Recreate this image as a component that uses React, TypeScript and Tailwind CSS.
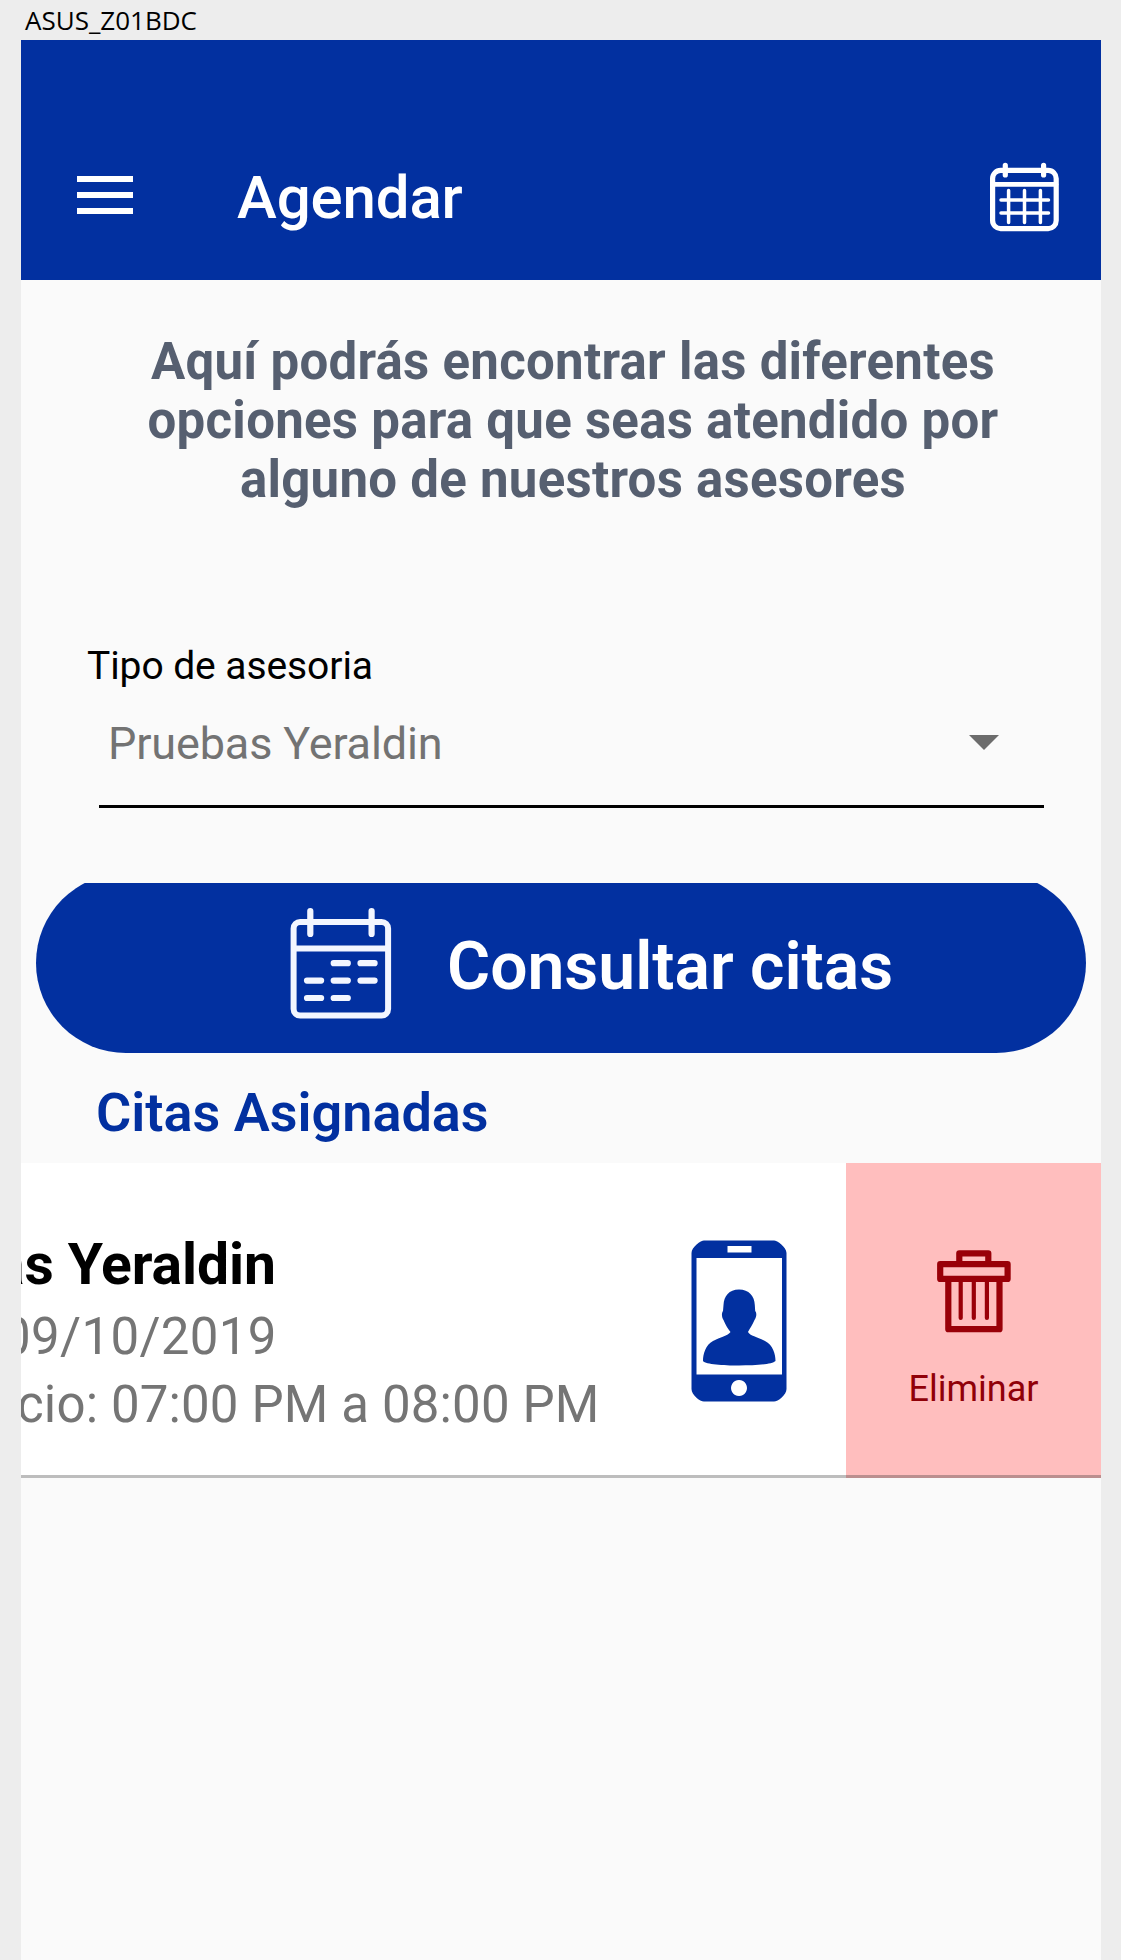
import React from "react";

function MenuIcon() {
  return (
    <div className="flex w-14 flex-col gap-2.5">
      <span className="h-1.5 bg-white" />
      <span className="h-1.5 bg-white" />
      <span className="h-1.5 bg-white" />
    </div>
  );
}

function CalendarGridIcon() {
  return (
    <svg width="70" height="70" viewBox="0 0 70 70" fill="none" stroke="#fff" strokeLinecap="round">
      <rect x="2.6" y="8.4" width="63.6" height="58.2" rx="8" strokeWidth="5.2" />
      <path d="M3 22.400H66" strokeWidth="4.8" />
      <path d="M15.3 3.400V13M53.6 3.400V13" strokeWidth="5.2" />
      <path d="M18.6 28.5V60.5M34.5 28.5V60.5M50.4 28.5V60.5M11 38H58.5M11 51H58.5" strokeWidth="3.5" />
    </svg>
  );
}

function CalendarListIcon() {
  return (
    <svg width="102" height="114" viewBox="0 0 102 114" fill="none" stroke="#f3f6ff" strokeLinecap="round">
      <rect x="3.600" y="16" width="94.5" height="93.600" rx="6.5" strokeWidth="6" />
      <path d="M4 42.5H98" strokeWidth="6" strokeLinecap="butt" />
      <path d="M20.3 5V28M81.600 5V28" strokeWidth="6.200" />
      <path
        d="M43.700 57.2H57.800M70.500 57.2H84.600M17 74.6H31.100M43.700 74.6H57.800M70.500 74.6H84.600M17 92H31.100M43.700 92H57.800"
        strokeWidth="6.200"
      />
    </svg>
  );
}

function PhoneContactIcon() {
  return (
    <svg width="96" height="162" viewBox="0 0 96 162">
      <path
        fillRule="evenodd"
        fill="#0230a0"
        d="M13 .5H83C86 .5 95.500 7 95.500 13V149C95.500 155 87 161.500 83 161.500H13C9 161.500 .5 155 .5 149V13C.5 7 10 .5 13 .5ZM5.500 18V134.500H91V18ZM36.500 6V12.500H60.500V6ZM48 140a8 8 0 1 0 .01 0Z"
      />
      <path
        fill="#0230a0"
        d="M48 49.500C58 49.500 63.500 56 63.800 65L64.200 71C66 73 65.500 77 63.500 80C61.500 85 58.500 89 57 92C59 96 67 97 74 101C82 105 84.500 114 84.500 121C81 124.500 64 125.500 48 125.500C32 125.500 15 124.500 12 121C12 114 14.500 105 22 101C29 97 37 96 39.500 92C37 89 34.500 85 32.500 80C30.500 77 30.500 73 32 71L32.500 65C33 56 38 49.500 48 49.500Z"
      />
    </svg>
  );
}

function TrashIcon() {
  return (
    <svg width="74" height="83" viewBox="0 0 74 83" fill="none" stroke="#990008" strokeLinejoin="round">
      <rect x="3.2" y="14.200" width="67.400" height="14.700" strokeWidth="6.200" />
      <path d="M22.300 13V3.300H51.300V13" strokeWidth="6.200" />
      <path d="M11.300 29V79.200H62.500V29" strokeWidth="6.200" />
      <path d="M23.700 32V68M36.800 32V68M49.900 32V68" strokeWidth="4.200" strokeLinecap="round" />
    </svg>
  );
}

export default function App() {
  return (
    <div className="h-[1960px] w-[1121px] overflow-hidden bg-[#ededed] font-['Roboto',sans-serif]">
      <div className="h-10 pl-[25px] pt-[2px] font-['Open_Sans',sans-serif] text-[26px] leading-[36px] text-black">
        ASUS_Z01BDC
      </div>

      <div className="ml-[21px] flex h-[1920px] w-[1080px] flex-col overflow-hidden bg-[#fafafa]">
        <header className="h-[240px] bg-[#0230a0] pt-[71px]">
          <div className="flex h-[168px] items-center pl-14 pr-[41px]">
            <MenuIcon />
            <h1 className="ml-[104px] mt-[6px] text-[60px] font-medium leading-[70px] tracking-[-0.15px] text-white">
              Agendar
            </h1>
            <div className="ml-auto mt-1">
              <CalendarGridIcon />
            </div>
          </div>
        </header>

        <p className="mt-[52px] h-[177px] whitespace-nowrap pl-[24px] text-center text-[51px] font-bold leading-[59px] tracking-[0.26px] text-[#565f70]">
          Aquí podrás encontrar las diferentes
          <br />
          opciones para que seas atendido por
          <br />
          alguno de nuestros asesores
        </p>

        <section className="mt-[134px] h-[165px] pl-[66px]">
          <div className="h-[46px] text-[39px] leading-[46px] tracking-[-0.08px] text-black">Tipo de asesoria</div>
          <div className="ml-3 mr-[57px] flex h-[119px] items-start justify-between border-b-[3px] border-black pl-[9px] pr-[45px] pt-[28px]">
            <span className="text-[45px] leading-[54px] tracking-[-0.15px] text-[#737373]">Pruebas Yeraldin</span>
            <svg className="mt-[18px]" width="30" height="15" viewBox="0 0 30 15">
              <path d="M0 0H30L15 15Z" fill="#6c6c6c" />
            </svg>
          </div>
        </section>

        <div className="mx-[15px] mt-[75px] h-[170px] overflow-hidden">
          <button className="-mt-[10px] flex h-[180px] w-full items-start rounded-full bg-[#0230a0] pl-[254px] text-white">
            <span className="mt-[33px]">
              <CalendarListIcon />
            </span>
            <span className="ml-[55px] mt-[55px] text-[66px] font-semibold leading-[78px]">Consultar citas</span>
          </button>
        </div>

        <h2 className="mt-[28px] h-[82px] pl-[75px] text-[54px] font-semibold leading-[64px] text-[#0230a0]">
          Citas Asignadas
        </h2>

        <div className="flex h-[315px] bg-white">
          <div className="flex w-[825px] border-b-[3px] border-[#bdbdbd]">
            <div className="w-[670px] whitespace-nowrap pt-[68px]">
              <div className="-ml-[27px] h-[72px] text-[57px] font-bold leading-[68px] tracking-[-0.1px] text-black">
                as Yeraldin
              </div>
              <div className="-ml-[19px] text-[51px] leading-[68px] tracking-[0.35px] text-[#757575]">09/10/2019</div>
              <div className="-ml-[4px] text-[51px] leading-[68px] tracking-[0.15px] text-[#757575]">
                cio: 07:00 PM a 08:00 PM
              </div>
            </div>
            <div className="pt-[77px]">
              <PhoneContactIcon />
            </div>
          </div>
          <div className="flex w-[255px] flex-col items-center border-b-[3px] border-[#bb8f8f] bg-[#ffbebe] pt-[87px]">
            <TrashIcon />
            <span className="mt-[35px] text-[36px] leading-[42px] text-[#900008]">Eliminar</span>
          </div>
        </div>
      </div>
    </div>
  );
}
